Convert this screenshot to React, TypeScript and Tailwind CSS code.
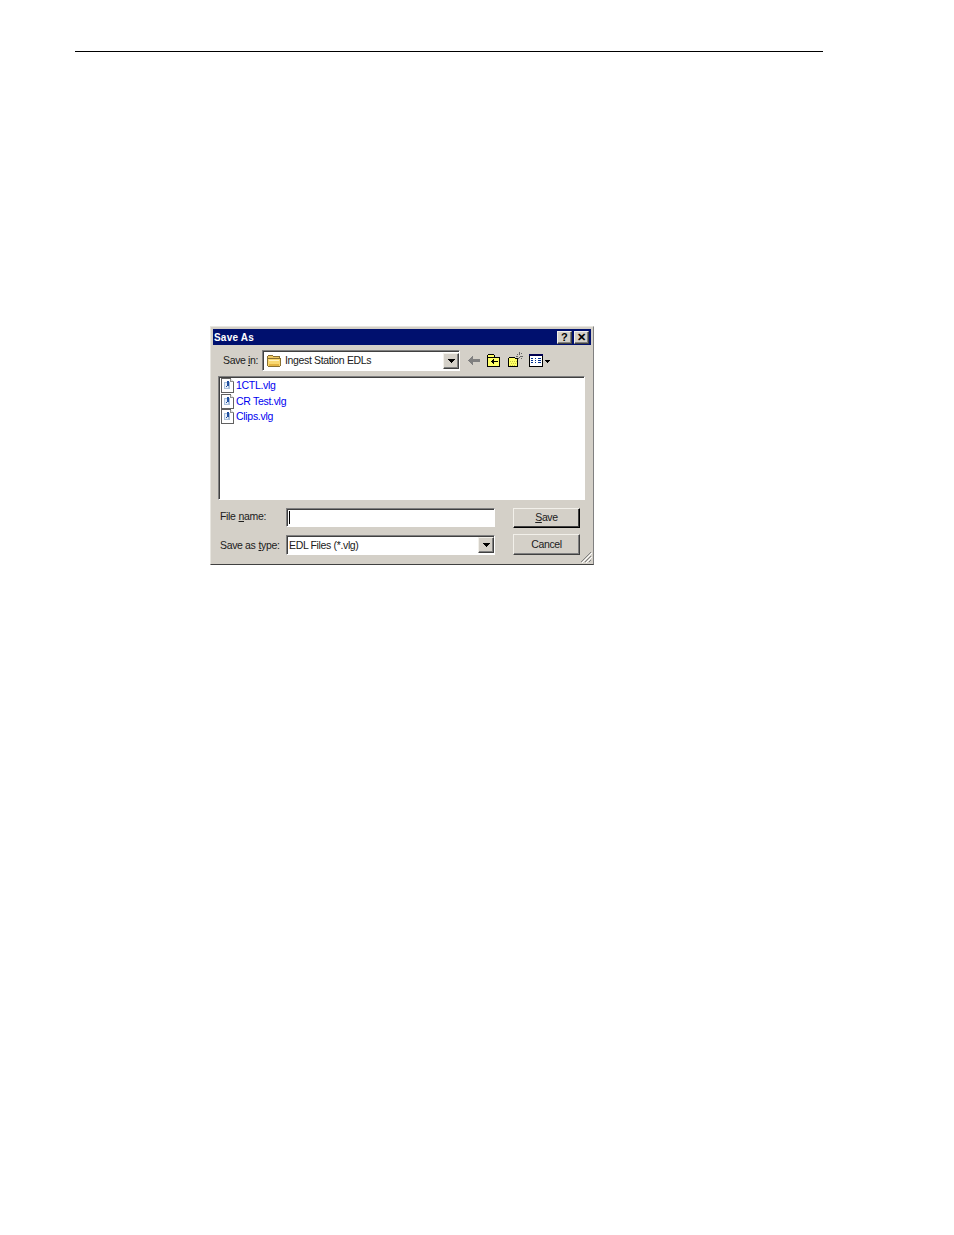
const uiFont = { fontFamily: '"Liberation Sans", Arial, sans-serif' }

function DropArrow() {
  return (
    <svg width="7" height="4" viewBox="0 0 7 4" shapeRendering="crispEdges">
      <path d="M0 0h7v1h-1v1h-1v1h-1v1h-1v-1h-1v-1h-1v-1h-1z" fill="#000" />
    </svg>
  )
}

function ComboButton() {
  return (
    <div className="flex h-[16px] w-[16px] items-center justify-center border border-t-[#f2f0ea] border-l-[#f2f0ea] border-r-[#404040] border-b-[#404040] bg-[#d4d0c8] shadow-[inset_-1px_-1px_0_#808080]">
      <DropArrow />
    </div>
  )
}

function FileIcon() {
  return (
    <svg width="13" height="15" viewBox="0 0 13 15" shapeRendering="crispEdges">
      <path d="M0.5 0.5h9l3 3v11h-12z" fill="#fff" stroke="#606060" />
      <path d="M9.5 0.5v3h3" fill="#e0e0e0" stroke="#909090" />
      <rect x="3" y="4" width="6" height="7" fill="#a9c0dc" />
      <rect x="4" y="5" width="3" height="5" fill="#e8eff8" />
      <rect x="6" y="3" width="2" height="5" fill="#1f4fa0" />
      <rect x="5" y="8" width="1" height="1" fill="#1f4fa0" />
    </svg>
  )
}

function FolderIcon() {
  return (
    <svg width="16" height="14" viewBox="0 0 16 14" shapeRendering="crispEdges">
      <path d="M1.5 2.5l1-1h4l1 1h6v2h-12z" fill="#f0c860" stroke="#8a7030" />
      <path d="M1.5 4.5h13v7l-1 1h-11l-1-1z" fill="#f9d870" stroke="#8a7030" />
      <path d="M3 6h10v1h-10z" fill="#fff2c0" />
      <path d="M3 10h10v2h-10z" fill="#e4b440" />
    </svg>
  )
}

function BackArrow() {
  return (
    <svg width="12" height="9" viewBox="0 0 12 9" shapeRendering="crispEdges">
      <path d="M4 0h1v3h7v3h-7v3h-1v-1h-1v-1h-1v-1h-1v-1h-1v-1h1v-1h1v-1h1v-1h1z" fill="#808080" />
    </svg>
  )
}

function UpFolderIcon() {
  return (
    <svg width="14" height="13" viewBox="0 0 14 13" shapeRendering="crispEdges">
      <path d="M0.5 3.5v-2l1-1h5l1 1v2h5v9h-12z" fill="#ffff66" stroke="#000" />
      <path d="M1 3h12v1h-12z" fill="#000" />
      <path d="M6 5h1v2h4v1h-4v2h-1v-1h-1v-1h-1v-1h1v-1h1z" fill="#000" />
    </svg>
  )
}

function NewFolderIcon() {
  return (
    <svg width="15" height="15" viewBox="0 0 15 15" shapeRendering="crispEdges">
      <path d="M0.5 6.5l1-1h5l1 1h2v8h-9z" fill="#ffff66" stroke="#000" />
      <path d="M2 9h1v1h-1zM4 9h1v1h-1zM6 9h1v1h-1zM8 9h1v1h-1zM3 11h1v1h-1zM5 11h1v1h-1zM7 11h1v1h-1zM2 13h1v1h-1zM4 13h1v1h-1zM6 13h1v1h-1z" fill="#c8c840" />
      <path d="M11 0h1v3h-1zM9 2h1v1h-1zM13 1h1v1h-1zM8 4h2v1h-2zM12 4h3v1h-3zM10 6h1v1h-1zM13 6h1v1h-1zM11 5h1v1h-1z" fill="#666" />
    </svg>
  )
}

function ViewsIcon() {
  return (
    <svg width="21" height="13" viewBox="0 0 21 13" shapeRendering="crispEdges">
      <path d="M0.5 0.5h13v12h-13z" fill="#fff" stroke="#000" />
      <path d="M0 0h14v2h-14z" fill="#000050" />
      <path d="M2 4h2v1h-2zM6 4h1v1h-1zM9 4h3v1h-3zM2 6h2v1h-2zM6 6h1v1h-1zM9 6h3v1h-3zM2 8h2v1h-2zM6 8h1v1h-1zM9 8h3v1h-3z" fill="#003090" />
      <path d="M16 6h5v1h-1v1h-1v1h-1v-1h-1v-1h-1z" fill="#000" />
    </svg>
  )
}

function Grip() {
  return (
    <svg className="absolute bottom-[1px] right-[1px]" width="12" height="12" viewBox="0 0 12 12">
      <path d="M11 1L1 11M11 5L5 11M11 9L9 11" stroke="#808080" strokeWidth="1" />
      <path d="M12 2L2 12M12 6L6 12" stroke="#fff" strokeWidth="1" />
    </svg>
  )
}

function TitleButton({ children }: { children: React.ReactNode }) {
  return (
    <div className="flex h-[13px] w-[15px] items-center justify-center border border-t-[#f2f0ea] border-l-[#f2f0ea] border-r-[#404040] border-b-[#404040] bg-[#d4d0c8] shadow-[inset_-1px_-1px_0_#808080]">
      {children}
    </div>
  )
}

function FileRow({ name }: { name: string }) {
  return (
    <div className="flex h-[15.5px] items-center gap-[2px] text-[10.5px] tracking-[-0.3px] text-[#0000f0]">
      <FileIcon />
      <span className="pt-[1px]">{name}</span>
    </div>
  )
}

export default function App() {
  return (
    <div className="min-h-[1235px] bg-white pt-[51px]" style={uiFont}>
      <div className="ml-[75px] h-[1px] w-[748px] bg-black" />
      <div className="relative ml-[210px] mt-[274px] h-[239px] w-[384px] border border-[#e8e6e0] border-b-[#404040] border-r-[#808080] bg-[#d4d0c8] p-[2px] text-[10.5px] tracking-[-0.35px] text-[#202020]">
        <div className="flex h-[16px] items-center justify-between bg-[#00106e] pl-[1px] pr-[2px] text-[10px] font-bold tracking-[0.2px] text-white">
          <span className="pt-[1px]">Save As</span>
          <div className="flex gap-[2px]">
            <TitleButton>
              <span className="text-[11px] font-bold leading-none text-black">?</span>
            </TitleButton>
            <TitleButton>
              <span className="text-[11px] font-bold leading-none text-black">✕</span>
            </TitleButton>
          </div>
        </div>

        <div className="mt-[5px] flex h-[21px] items-center pl-[10px]">
          <span className="w-[39px]">
            Save <span className="underline">i</span>n:
          </span>
          <div className="flex h-[21px] w-[198px] items-center justify-between border border-t-[#808080] border-l-[#808080] border-r-[#fff] border-b-[#fff] bg-white pl-[3px] shadow-[inset_1px_1px_0_#404040]">
            <div className="flex items-center gap-[3px]">
              <FolderIcon />
              <span>Ingest Station EDLs</span>
            </div>
            <ComboButton />
          </div>
          <div className="ml-[8px] flex items-center">
            <BackArrow />
            <div className="ml-[7px]">
              <UpFolderIcon />
            </div>
            <div className="ml-[7px] mb-[2px]">
              <NewFolderIcon />
            </div>
            <div className="ml-[6px]">
              <ViewsIcon />
            </div>
          </div>
        </div>

        <div className="ml-[5px] mt-[5px] h-[124px] w-[367px] border border-t-[#808080] border-l-[#808080] border-r-[#fff] border-b-[#fff] bg-white pl-[2px] pt-[1px] shadow-[inset_1px_1px_0_#404040]">
          <FileRow name="1CTL.vlg" />
          <FileRow name="CR Test.vlg" />
          <FileRow name="Clips.vlg" />
        </div>

        <div className="mt-[8px] flex pl-[7px]">
          <div className="w-[66px]">
            <div className="flex h-[17px] items-center">
              File <span className="ml-[3px] underline">n</span>ame:
            </div>
            <div className="mt-[10px] flex h-[20px] items-center pt-[1px]">
              Save as <span className="ml-[3px] underline">t</span>ype:
            </div>
          </div>
          <div className="w-[209px]">
            <div className="h-[19px] border border-t-[#808080] border-l-[#808080] border-r-[#fff] border-b-[#fff] bg-white shadow-[inset_1px_1px_0_#404040]">
              <div className="ml-[2px] mt-[2px] h-[13px] w-[1px] bg-black" />
            </div>
            <div className="mt-[8px] flex h-[20px] items-center justify-between border border-t-[#808080] border-l-[#808080] border-r-[#fff] border-b-[#fff] bg-white pl-[2px] shadow-[inset_1px_1px_0_#404040]">
              <span className="pt-[1px]">EDL Files (*.vlg)</span>
              <ComboButton />
            </div>
          </div>
          <div className="ml-[18px] w-[67px]">
            <div className="flex h-[20px] items-center justify-center border border-t-[#f2f0ea] border-l-[#f2f0ea] border-r-[#000] border-b-[#000] bg-[#d4d0c8] shadow-[inset_-1px_-1px_0_#404040]">
              <span>
                <span className="underline">S</span>ave
              </span>
            </div>
            <div className="mt-[6px] flex h-[21px] items-center justify-center border border-t-[#f2f0ea] border-l-[#f2f0ea] border-r-[#404040] border-b-[#404040] bg-[#d4d0c8] shadow-[inset_-1px_-1px_0_#808080]">
              Cancel
            </div>
          </div>
        </div>
        <Grip />
      </div>
    </div>
  )
}
